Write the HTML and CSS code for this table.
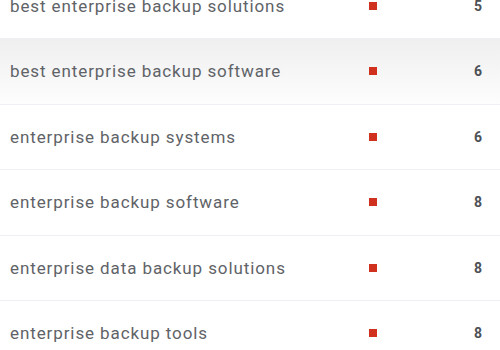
FILE: index.html
```html
<!DOCTYPE html>
<html>
<head>
<meta charset="utf-8">
<link rel="stylesheet" href="styles.css">
</head>
<body>
<ul class="list">
  <li class="row"><span class="kw">best enterprise backup solutions</span><span class="mark"></span><span class="num">5</span></li>
  <li class="row hover"><span class="kw">best enterprise backup software</span><span class="mark"></span><span class="num">6</span></li>
  <li class="row"><span class="kw">enterprise backup systems</span><span class="mark"></span><span class="num">6</span></li>
  <li class="row"><span class="kw">enterprise backup software</span><span class="mark"></span><span class="num">8</span></li>
  <li class="row"><span class="kw">enterprise data backup solutions</span><span class="mark"></span><span class="num">8</span></li>
  <li class="row"><span class="kw">enterprise backup tools</span><span class="mark"></span><span class="num">8</span></li>
</ul>
</body>
</html>
```
FILE: styles.css
```css
html, body {
  margin: 0;
  padding: 0;
  background: #ffffff;
  overflow: hidden;
}
.list {
  list-style: none;
  margin: -26.5px 0 0 0;
  padding: 0;
  font-family: Roboto, "Liberation Sans", sans-serif;
}
.row {
  height: 65.5px;
  box-sizing: border-box;
  display: flex;
  align-items: center;
  padding: 0 18px 0 10px;
  border-bottom: 1px solid #eef0f4;
}
.row.hover {
  background: linear-gradient(#efefef, #fdfdfd);
}
.kw {
  flex: 1;
  font-size: 17px;
  color: #5f6368;
  letter-spacing: 0.9px;
}
.mark {
  width: 8px;
  height: 8px;
  background: #d0311e;
  margin-right: 97px;
}
.num {
  width: 8px;
  text-align: right;
  font-size: 14px;
  font-weight: 700;
  color: #4d5156;
}
```
